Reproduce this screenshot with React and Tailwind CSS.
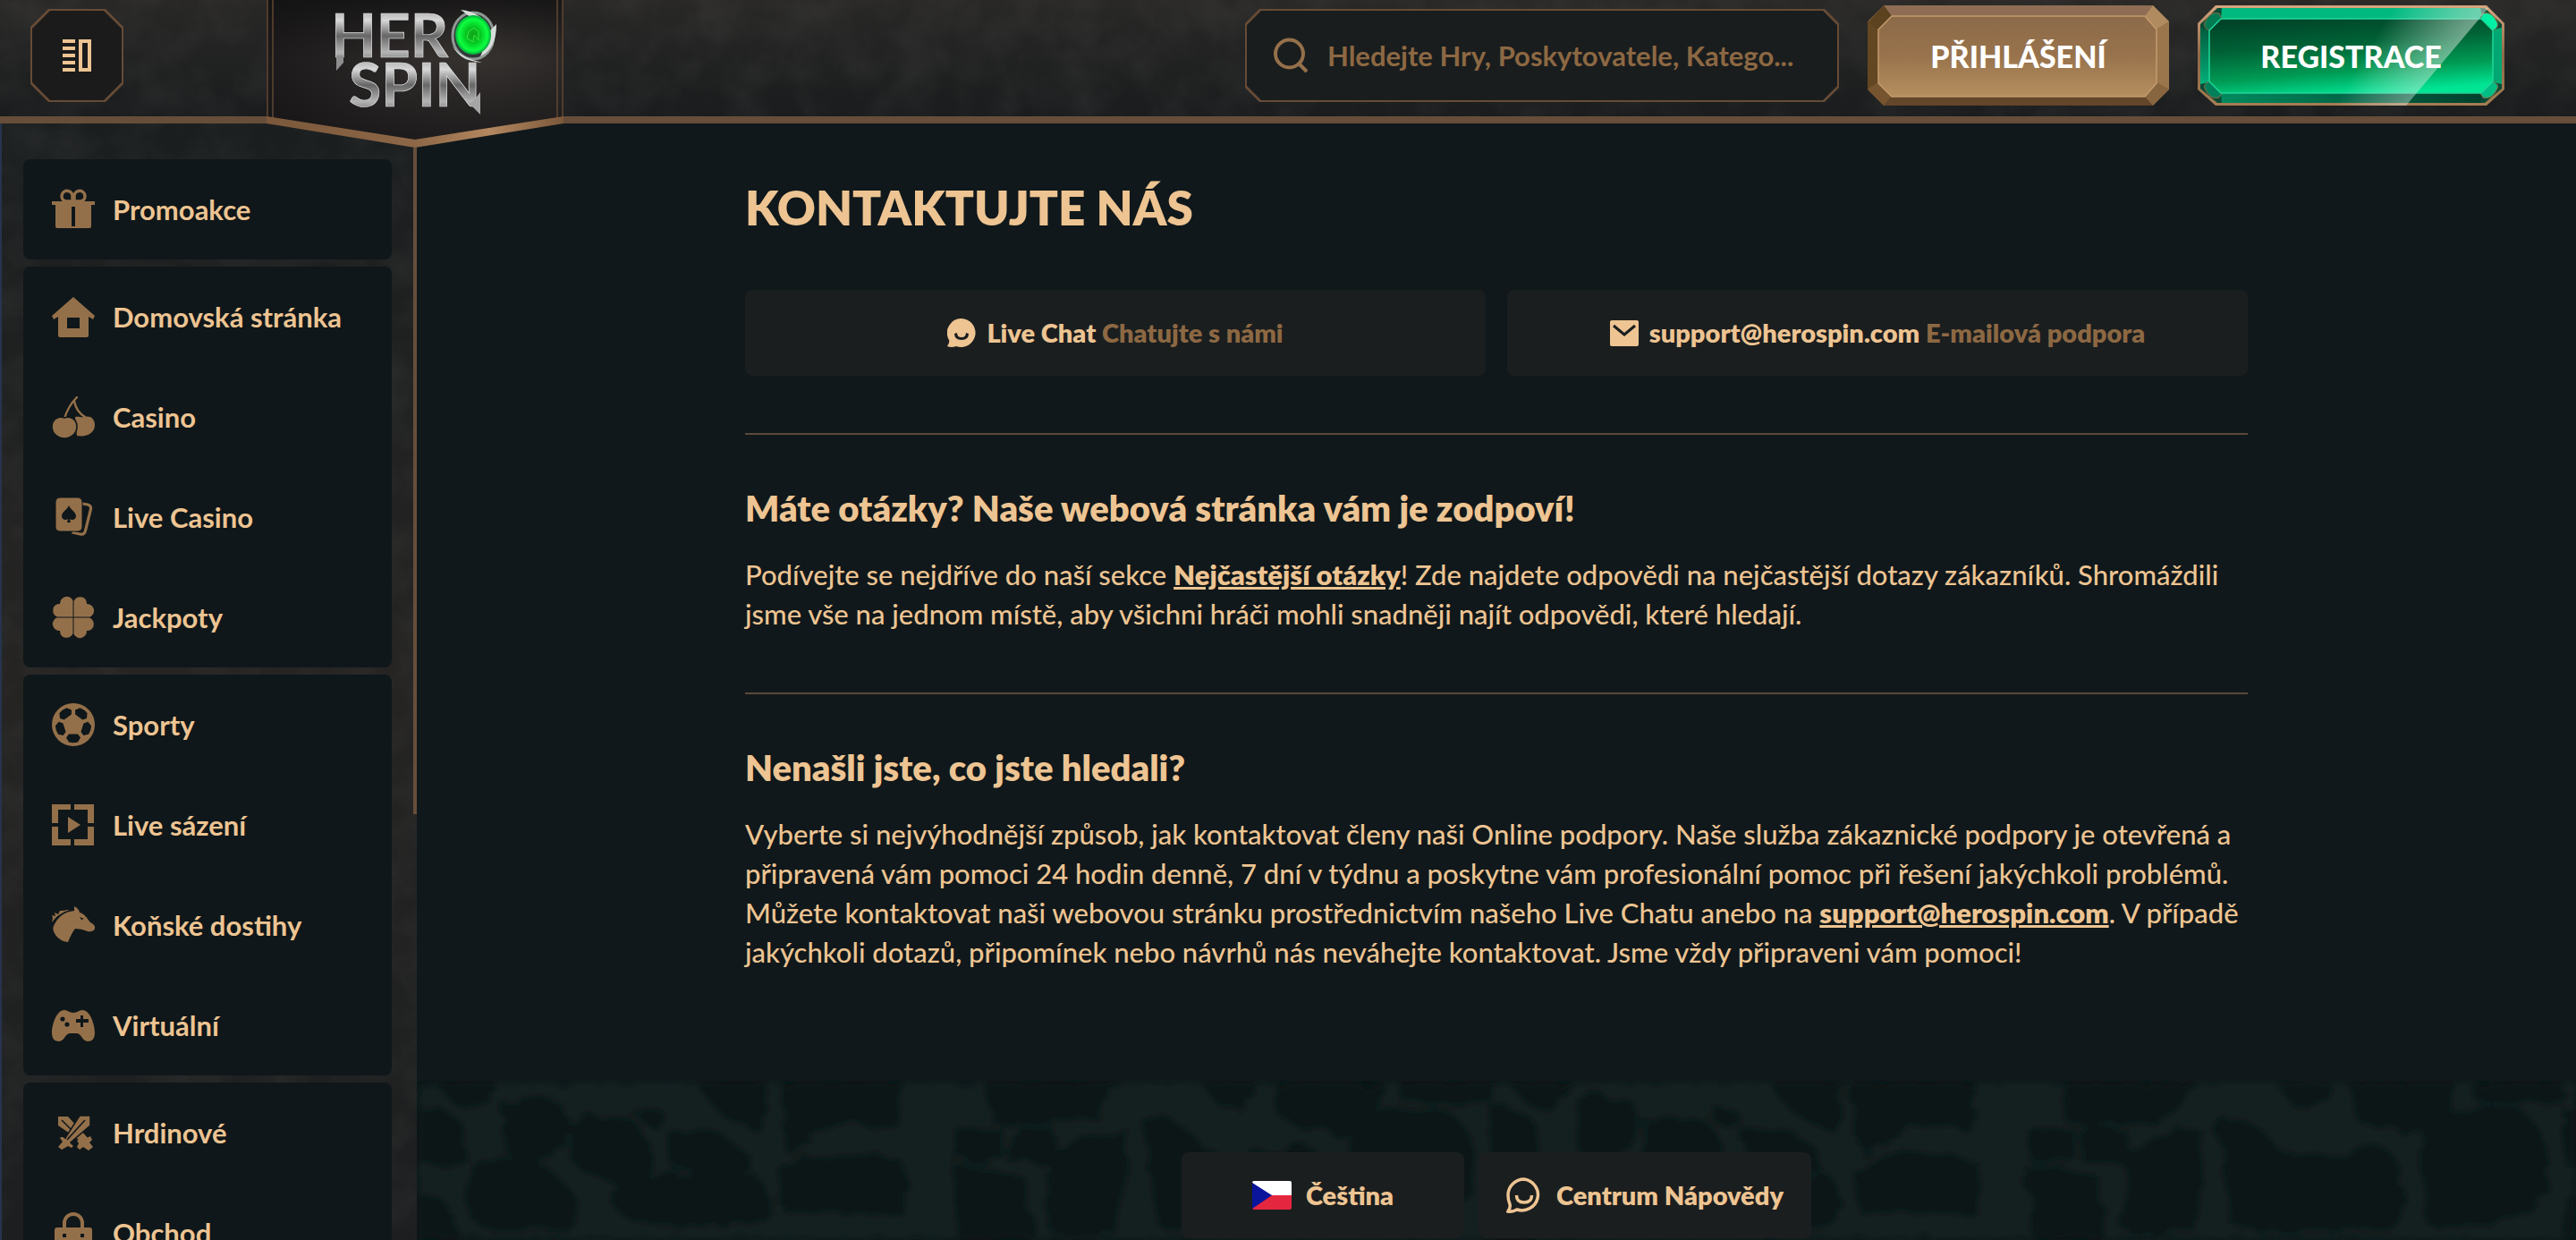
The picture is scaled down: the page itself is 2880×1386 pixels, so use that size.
import React from "react";

const bg = "#0f171a";

const Icon = ({ children, className = "size-12" }) => (
  <svg viewBox="0 0 48 48" fill="currentColor" className={className} aria-hidden="true">
    {children}
  </svg>
);

const Gift = () => (
  <Icon>
    <path d="M0 15h48v4h-4v24q0 2-2 2H6q-2 0-2-2V19H0z" />
    <path d="M23 15h-8a6 6 0 1 1 8-5zM25 15h8a6 6 0 1 0-8-5z" fill={bg} stroke="currentColor" strokeWidth="3.5" />
    <path d="M22 21h4v22h-4z" fill={bg} />
  </Icon>
);

const Home = () => (
  <Icon>
    <path
      fillRule="evenodd"
      d="M24 2l24 21-2 4-5-3v21q0 2-2 2H9q-2 0-2-2V24l-5 3-2-4zM17 25v12h14V25z"
    />
  </Icon>
);

const Cherry = () => (
  <Icon>
    <path d="M14 26Q18 12 28 2M25 6q2 12 12 18" fill="none" stroke="currentColor" strokeWidth="2.4" strokeLinecap="round" />
    <path d="M26 24c4-1 7 1 10 0 6-2 12 1 12 9 0 9-9 14-20 12z" />
    <path
      d="M14 25c5-2 14 0 14 10 0 7-6 13-14 13S0 42 0 35c0-10 9-12 14-10z"
      stroke={bg}
      strokeWidth="1.6"
    />
  </Icon>
);

const Cards = () => (
  <Icon>
    <path d="M34 9l6 1q4 1 3.500 5l-6 24q-1 5-6 4l-9-2" fill="none" stroke="currentColor" strokeWidth="3.2" />
    <rect x="4" y="2" width="30" height="38" rx="5" stroke={bg} strokeWidth="1" />
    <path d="M19 11c2 5 8 7 8 12 0 4-5 5-7 3l1 4h-4l1-4c-2 2-7 1-7-3 0-5 6-7 8-12z" fill={bg} />
  </Icon>
);

const Clover = () => (
  <Icon>
    {[0, 90, 180, 270].map((a) => (
      <path
        key={a}
        transform={`rotate(${a} 24 24)`}
        d="M23.500 23.500V5Q20 0 15 1 9 3 9 9 3 9 1.500 14 0 21 6 23.500z"
      />
    ))}
  </Icon>
);

const Ball = () => (
  <Icon>
    <circle cx="24" cy="24" r="24" />
    <g fill={bg}>
      {[0, 72, 144, 216, 288].map((a) => (
        <path key={a} transform={`rotate(${a} 24 24)`} d="M19 34.500h10l3 4-3 5q-5 1.500-10 0l-3-5z" />
      ))}
    </g>
  </Icon>
);

const LiveBet = () => (
  <Icon>
    <path d="M0 1h21v6H7v15H0zM25 1h22v21h-7V7H25zM0 26h7v14h14v7H0zM40 26h7v21H25v-7h15zM18 15l14 9-14 9z" />
  </Icon>
);

const Horse = () => (
  <Icon>
    <path d="M0 21l1-5-1-3 4 1-1-4 4 2 2-4c5 0 7-1 11-1C11 10 6 13 0 21z" />
    <path
      fillRule="evenodd"
      d="M2 25C6 16 13 9 25 8V3q5 2 6 7c5 1 8 6 12 11q6 3 5 7-2 4-8 3-7-3-14-3-4 5-8 15-9-1-14-8-4-6-2-10zM31 15l2 3 3-1z"
    />
  </Icon>
);

const Gamepad = () => (
  <Icon>
    <path
      fillRule="evenodd"
      d="M14 7c4 0 5 3 10 3s6-3 10-3c9 0 14 17 14 25 0 7-3 10-8 10-6 0-7-9-12-9h-8c-5 0-6 9-12 9-5 0-8-3-8-10C0 24 5 7 14 7zM32 13v4h-5v4h5v5h3v-5h6v-4h-6v-4z"
    />
    <circle cx="12" cy="17" r="2.600" fill={bg} />
    <circle cx="17" cy="23" r="2.600" fill={bg} />
  </Icon>
);

const Swords = () => (
  <Icon>
    <path d="M7 6h11L43 33l-4 5L7 16z" />
    <path d="M11 10l16 16" stroke={bg} strokeWidth="1.600" />
    <path d="M43 5v11L21 35l4 4-3 3-4-2-7 4-5-4 5-6-3-4 3-3 4 3L31 5z" stroke={bg} strokeWidth="1.600" />
    <path d="M37 10L17 32" stroke={bg} strokeWidth="1.600" />
    <path d="M35 27l4 3 4-2 2 4-3 3 4 5-5 4-6-4-4 3-3-3 2-4-2-3z" />
  </Icon>
);

const Bag = () => (
  <Icon>
    <path d="M14 20v-7a10 10 0 0 1 20 0v7" fill="none" stroke="currentColor" strokeWidth="4" />
    <path fillRule="evenodd" d="M6 18h36q3 0 3 3v24H3V21q0-3 3-3zM12 25v4h4v-4zM32 25v4h4v-4z" />
  </Icon>
);

const groups = [
  [["Promoakce", Gift]],
  [["Domovská stránka", Home], ["Casino", Cherry], ["Live Casino", Cards], ["Jackpoty", Clover]],
  [["Sporty", Ball], ["Live sázení", LiveBet], ["Koňské dostihy", Horse], ["Virtuální", Gamepad]],
  [["Hrdinové", Swords], ["Obchod", Bag]],
];

const Grain = ({ id }) => (
  <svg className="absolute inset-0 size-full" aria-hidden="true">
    <filter id={id}>
      <feTurbulence type="fractalNoise" baseFrequency="0.022" numOctaves="5" seed="8" />
      <feColorMatrix values="0 0 0 0 0.5  0 0 0 0 0.48  0 0 0 0 0.46  0.9 0 0 0 -0.3" />
    </filter>
    <rect width="100%" height="100%" filter={`url(#${id})`} opacity="0.13" />
  </svg>
);

const Logo = () => (
  <svg viewBox="0 0 332 166" className="h-[166px] w-[332px]" role="img" aria-label="Hero Spin">
    <defs>
      <radialGradient id="plate" cx="0.7" cy="0.3" r="0.8">
        <stop offset="0" stopColor="#3a3633" />
        <stop offset="0.5" stopColor="#272424" />
        <stop offset="1" stopColor="#191718" />
      </radialGradient>
      <linearGradient id="plateTop" x1="0" y1="0" x2="0" y2="1">
        <stop offset="0" stopColor="#111" stopOpacity="0.7" />
        <stop offset="0.4" stopColor="#111" stopOpacity="0" />
      </linearGradient>
      <linearGradient id="bronze">
        <stop offset="0" stopColor="#7b583b" />
        <stop offset="0.5" stopColor="#8d6747" />
        <stop offset="0.75" stopColor="#b3875f" />
        <stop offset="1" stopColor="#7b583b" />
      </linearGradient>
      <linearGradient id="steel" x1="0" y1="0" x2="0" y2="1">
        <stop offset="0" stopColor="#7d7d7d" />
        <stop offset="0.3" stopColor="#d8d8d8" />
        <stop offset="0.52" stopColor="#666" />
        <stop offset="0.75" stopColor="#b4b4b4" />
        <stop offset="1" stopColor="#505050" />
      </linearGradient>
      <radialGradient id="gem">
        <stop offset="0" stopColor="#12a018" />
        <stop offset="0.4" stopColor="#05c520" />
        <stop offset="0.8" stopColor="#0cff40" />
        <stop offset="1" stopColor="#06a83c" />
      </radialGradient>
    </defs>
    <path d="M0 0H332V137L166 165 0 137z" fill="url(#plate)" />
    <path d="M0 0H332V137L166 165 0 137z" fill="url(#plateTop)" />
    <path d="M1 0V134M7 0V132M331 0V134M325 0V132" stroke="#5f4735" strokeWidth="1.500" />
    <path d="M0 130L166 156 332 130V138L166 165 0 138z" fill="url(#bronze)" />
    <g fontFamily="Lato, sans-serif" fontWeight="700" fontSize="66" fill="url(#steel)" stroke="#dedede" strokeWidth="0.700">
      <text x="72" y="64">HER</text>
      <text x="92" y="119">SPIN</text>
    </g>
    <path d="M78 62h8v8l-8 9z" fill="#8f8f8f" />
    <path d="M228 117l11-14v25z" fill="#a5a5a5" />
    <ellipse cx="231" cy="40" rx="23" ry="26" fill="#33373a" stroke="#8f9994" strokeWidth="3" />
    <path d="M217 11q24 2 33 23l7-7q0 28-18 36 14-28-22-52zM207 50q8 14 34 20-24-1-34-20z" fill="#d9dedb" />
    <ellipse cx="231" cy="39" rx="20" ry="22" fill="url(#gem)" />
    <path d="M224 43l2-8 6-4 5 4v10l-5-6-1 8z" fill="none" stroke="#39e33f" strokeWidth="1" />
  </svg>
);

const LoginPlate = () => (
  <svg viewBox="0 0 337 112" className="absolute inset-0 size-full" preserveAspectRatio="none" aria-hidden="true">
    <defs>
      <linearGradient id="loginFace" x1="0" y1="0" x2="0" y2="1">
        <stop offset="0" stopColor="#8c6a49" />
        <stop offset="0.5" stopColor="#98734c" />
        <stop offset="1" stopColor="#b68f60" />
      </linearGradient>
    </defs>
    <path d="M18 0H319L337 18V94L319 112H18L0 94V18z" fill="#7d5d3e" />
    <path d="M18 0H319L310 12H27z" fill="#8f6d55" />
    <path d="M18 0L27 12 12 27 0 20z" fill="#5c421f" />
    <path d="M0 18L12 27V86L0 94z" fill="#634722" />
    <path d="M319 0L337 18 323 27 310 12z" fill="#b18b60" />
    <path d="M337 18V94L323 86V27z" fill="#9b764c" />
    <path d="M0 94L12 86 26 102 18 112z" fill="#75542f" />
    <path d="M18 112L27 101H310L319 112z" fill="#63452a" />
    <path d="M337 94L323 86 310 102 319 112z" fill="#87653f" />
    <path d="M27 12H310L323 27V87L310 102H27L12 87V27z" fill="url(#loginFace)" stroke="#c49b6d" strokeWidth="1.500" />
  </svg>
);

const RegisterPlate = () => (
  <svg viewBox="0 0 343 112" className="absolute inset-0 size-full" preserveAspectRatio="none" aria-hidden="true">
    <defs>
      <linearGradient id="regFace" x1="0.3" y1="0" x2="0.6" y2="1">
        <stop offset="0" stopColor="#004529" />
        <stop offset="0.35" stopColor="#006236" />
        <stop offset="0.7" stopColor="#009a54" />
        <stop offset="1" stopColor="#00e594" />
      </linearGradient>
      <linearGradient id="regRim" x1="0" y1="0" x2="0" y2="1">
        <stop offset="0" stopColor="#d7a57e" />
        <stop offset="0.5" stopColor="#8d6a48" />
        <stop offset="1" stopColor="#a67d52" />
      </linearGradient>
      <linearGradient id="regSide" x1="0" y1="0" x2="0" y2="1">
        <stop offset="0" stopColor="#005b3d" />
        <stop offset="1" stopColor="#00b07a" />
      </linearGradient>
      <linearGradient id="regBottom">
        <stop offset="0" stopColor="#008a5e" />
        <stop offset="1" stopColor="#00402c" />
      </linearGradient>
      <linearGradient id="gloss" gradientUnits="userSpaceOnUse" x1="205" y1="25" x2="276" y2="68">
        <stop offset="0" stopColor="#fff" stopOpacity="0" />
        <stop offset="1" stopColor="#d8e8dd" stopOpacity="0.5" />
      </linearGradient>
    </defs>
    <path d="M20 0H323L343 20V94L323 112H20L0 94V20z" fill="url(#regRim)" />
    <path d="M22 3H321L340 21V93L321 109H22L3 93V21z" fill="#0a4a34" />
    <path d="M27 3H316L319 15H26z" fill="#00b97f" />
    <path d="M27 109H316L319 98H26z" fill="url(#regBottom)" />
    <path d="M3 25L13 27V86L3 88z" fill="url(#regSide)" />
    <path d="M340 25L330 27V86L340 88z" fill="#00a773" />
    <path d="M8 19Q14 6 24 9L27 15 13 28Q6 25 8 19z" fill="#017a52" stroke="#8d6a48" strokeWidth="1" />
    <path d="M335 19Q329 6 319 9L316 15 330 28Q337 25 335 19z" fill="#00f0a4" stroke="#8d6a48" strokeWidth="1" />
    <path d="M8 93Q14 106 24 103L27 98 13 85Q6 88 8 93z" fill="#01805a" stroke="#8d6a48" strokeWidth="1" />
    <path d="M335 93Q329 106 319 103L316 98 330 85Q337 88 335 93z" fill="#00bd84" stroke="#8d6a48" strokeWidth="1" />
    <path d="M26 15H317L330 28V85L317 98H26L13 85V28z" fill="url(#regFace)" stroke="#1fd79a" strokeWidth="1.500" />
    <path d="M215 3H325L233 112H120z" fill="url(#gloss)" />
  </svg>
);

const stones = [
  "M20 0H86Q84 22 70 28 50 32 40 22z", "M0 32Q30 26 50 50 60 90 40 96L0 92z", "M98 26Q120 10 160 26 180 50 150 80 120 96 100 76z",
  "M175 52Q200 34 240 46 266 70 256 96 236 112 200 108 164 92 175 52z", "M62 100Q90 84 140 96 190 130 176 160 120 170 66 158 50 130 62 100z",
  "M240 34Q256 24 276 36 280 50 262 50z", "M284 60Q320 46 350 70 376 80 370 96 330 104 290 96z", "M222 108Q300 104 376 104 400 130 392 156 320 170 240 154 210 140 222 108z",
  "M316 0H392Q392 40 380 52 330 40 316 0z", "M406 0H540Q552 40 520 56 490 40 460 52 430 80 412 78z", "M404 100Q450 76 540 88 550 120 540 148 470 146 412 146z",
  "M604 56H652V86L604 88z", "M662 56H712V92L664 90z", "M640 0H792Q770 20 760 42 700 50 646 46z", "M600 96L676 106Q690 140 680 190H610z",
  "M712 90Q740 60 790 50 802 100 780 165 730 180 706 164z", "M812 40Q860 44 880 78 900 100 990 70 1040 100 1010 165 900 170 830 160z",
  "M880 4H938Q926 36 900 30z", "M958 0H1080Q1078 34 1046 52 1010 60 970 44z", "M1040 60Q1080 24 1150 34 1190 60 1180 120 1150 170 1050 160z",
  "M1100 0H1200V22Q1150 26 1100 20z", "M0 130Q40 120 50 190H0z",
];

const StoneWall = () => (
  <svg className="absolute inset-0 size-full" aria-hidden="true">
    <defs>
      <filter id="soft" x="0" y="0" width="1" height="1">
        <feTurbulence type="fractalNoise" baseFrequency="0.04" numOctaves="4" seed="4" result="n" />
        <feDisplacementMap in="SourceGraphic" in2="n" scale="24" result="d" />
        <feGaussianBlur in="d" stdDeviation="5" />
      </filter>
      <pattern id="wall" width="1200" height="190" patternUnits="userSpaceOnUse">
        <rect width="1200" height="190" fill="#162122" />
        {stones.map((d, i) => (
          <path key={d} d={d} fill={i % 3 ? "#091516" : "#0c1818"} stroke="#0b1718" strokeWidth="4" />
        ))}
      </pattern>
    </defs>
    <rect width="100%" height="100%" fill="#0b1718" />
    <rect width="100%" height="100%" fill="url(#wall)" filter="url(#soft)" opacity="0.85" />
  </svg>
);

const cut20 = "[clip-path:polygon(20px_0,calc(100%-20px)_0,100%_20px,100%_calc(100%-20px),calc(100%-20px)_100%,20px_100%,0_calc(100%-20px),0_20px)]";
const cut16 = "[clip-path:polygon(16px_0,calc(100%-16px)_0,100%_16px,100%_calc(100%-16px),calc(100%-16px)_100%,16px_100%,0_calc(100%-16px),0_16px)]";

export default function App() {
  return (
    <div className="flex h-screen flex-col overflow-hidden bg-[#10181b] font-[Lato,sans-serif] text-[#edc492]">
      <header className="relative z-10 flex h-[138px] shrink-0 items-start border-b-8 border-[#664e3a] bg-linear-to-b from-[#292827] to-[#1a1c1d] pr-20 pl-[34px]">
        <Grain id="grainTop" />
        <button type="button" aria-label="Menu" className={`relative mt-[10px] size-[104px] bg-[#664b36] p-0.5 ${cut20}`}>
          <span className={`flex size-full items-center justify-center bg-[#1b1b1b] ${cut20}`}>
            <svg viewBox="0 0 32 36" className="h-9 w-8" fill="currentColor" aria-hidden="true">
              <path fillRule="evenodd" d="M0 0h14v4H0zM0 8h14v4H0zM0 16h14v4H0zM0 24h14v4H0zM0 32h14v4H0zM18 0h14v36H18zM22 4v28h6V4z" />
            </svg>
          </span>
        </button>
        <a href="#home" className="relative ml-40 shrink-0">
          <Logo />
        </a>
        <div className="relative ml-auto flex gap-8">
          <div className={`mt-[10px] h-[104px] w-[664px] bg-[#664b36] p-0.5 ${cut16}`}>
            <label className={`flex size-full items-center gap-5 bg-[#1a1d1e] pr-9 pl-[30px] ${cut16}`}>
              <svg viewBox="0 0 40 40" className="size-10 shrink-0 text-[#94704a]" fill="none" stroke="currentColor" strokeWidth="4" aria-hidden="true">
                <circle cx="17.500" cy="18" r="15.500" />
                <path d="M28 29l9 9" />
              </svg>
              <input
                type="text"
                aria-label="Hledat"
                placeholder="Hledejte Hry, Poskytovatele, Katego..."
                className="min-w-0 flex-1 bg-transparent text-[31px] font-bold outline-none placeholder:text-[#8c6843]"
              />
            </label>
          </div>
          <button type="button" className="relative mt-[6px] h-28 w-[337px] text-[34px] font-black text-white">
            <LoginPlate />
            <span className="relative">PŘIHLÁŠENÍ</span>
          </button>
          <button type="button" className="relative mt-[6px] h-28 w-[343px] text-[34px] font-black text-white">
            <RegisterPlate />
            <span className="relative">REGISTRACE</span>
          </button>
        </div>
      </header>

      <div className="flex min-h-0 flex-1">
        <aside className="relative flex w-[466px] shrink-0 overflow-hidden border-l-2 border-[#26344f] bg-linear-to-b from-[#1b1e1f] via-[#252423] to-[#1c1e1f]">
          <Grain id="grainSide" />
          <nav className="relative flex flex-1 flex-col gap-2 pt-10 pr-6 pl-6">
            {groups.map((items) => (
              <ul key={items[0][0]} className="rounded-lg bg-[#0f171a]">
                {items.map(([label, Glyph]) => (
                  <li key={label}>
                    <a href="#nav" className="flex h-28 items-center gap-5 pl-8 text-[31px] font-bold">
                      <span className="text-[#94704a]">
                        <Glyph />
                      </span>
                      {label}
                    </a>
                  </li>
                ))}
              </ul>
            ))}
          </nav>
          <div className="relative h-[772px] w-1 bg-[#664e3a]" />
        </aside>

        <main className="flex min-w-0 flex-1 flex-col">
          <div className="mx-auto w-full max-w-[1680px] pt-[62px] pb-[122px]">
            <h1 className="mb-[60px] text-[53px] leading-[64px] font-extrabold">KONTAKTUJTE NÁS</h1>
            <div className="mb-16 grid grid-cols-2 gap-6 text-[29px] font-extrabold">
              <a href="#chat" className="flex h-24 items-center justify-center gap-3 rounded-lg bg-[#1b1e1f]">
                <svg viewBox="0 0 32 32" className="size-8" fill="currentColor" aria-hidden="true">
                  <path fillRule="evenodd" d="M16 0a16 16 0 1 1-6 31q-5 2-10 0 3-4 2-7A16 16 0 0 1 16 0zM8 17q0 7 8 7t8-7l-3-1q0 5-5 5t-5-5z" />
                </svg>
                <span>
                  Live Chat <span className="text-[#8c6843]">Chatujte s námi</span>
                </span>
              </a>
              <a href="mailto:support@herospin.com" className="flex h-24 items-center justify-center gap-3 rounded-lg bg-[#1b1e1f]">
                <svg viewBox="0 0 32 29" className="h-[29px] w-8" aria-hidden="true">
                  <rect width="32" height="29" rx="2" fill="currentColor" />
                  <path d="M4 6l12 10L28 6" fill="none" stroke="#1b1e1f" strokeWidth="3" />
                </svg>
                <span>
                  support@herospin.com <span className="text-[#8c6843]">E-mailová podpora</span>
                </span>
              </a>
            </div>
            <section className="border-t-2 border-[#5b493b] pt-14 pb-[66px]">
              <h2 className="mb-[26px] text-[40px] leading-[52px] font-extrabold">Máte otázky? Naše webová stránka vám je zodpoví!</h2>
              <p className="text-[31px] leading-[44px] font-medium">
                Podívejte se nejdříve do naší sekce{" "}
                <a href="#faq" className="font-extrabold underline">Nejčastější otázky</a>! Zde najdete odpovědi na
                nejčastější dotazy zákazníků. Shromáždili jsme vše na jednom místě, aby všichni hráči mohli snadněji
                najít odpovědi, které hledají.
              </p>
            </section>
            <section className="border-t-2 border-[#5b493b] pt-14">
              <h2 className="mb-[26px] text-[40px] leading-[52px] font-extrabold">Nenašli jste, co jste hledali?</h2>
              <p className="text-[31px] leading-[44px] font-medium">
                Vyberte si nejvýhodnější způsob, jak kontaktovat členy naši Online podpory. Naše služba zákaznické
                podpory je otevřená a připravená vám pomoci 24 hodin denně, 7 dní v týdnu a poskytne vám profesionální
                pomoc při řešení jakýchkoli problémů. Můžete kontaktovat naši webovou stránku prostřednictvím našeho
                Live Chatu anebo na{" "}
                <a href="mailto:support@herospin.com" className="font-extrabold underline">support@herospin.com</a>. V
                případě jakýchkoli dotazů, připomínek nebo návrhů nás neváhejte kontaktovat. Jsme vždy připraveni vám
                pomoci!
              </p>
            </section>
          </div>

          <footer className="relative flex flex-1 items-start justify-center gap-4 pt-20 text-[29px] font-extrabold">
            <StoneWall />
            <button type="button" className="relative flex h-24 w-[316px] items-center justify-center gap-4 rounded-lg bg-[#1b1e1f]">
              <svg viewBox="0 0 44 32" className="h-8 w-11" aria-hidden="true">
                <path d="M2 0h40q2 0 2 2v14H16L0 2q0-2 2-2z" fill="#fff" />
                <path d="M22 16h22v14q0 2-2 2H2q-2 0-2-2z" fill="#e5263f" />
                <path d="M0 2L22 16 0 31z" fill="#0a159c" />
              </svg>
              Čeština
            </button>
            <a href="#help" className="relative flex h-24 w-[372px] items-center justify-center gap-4 rounded-lg bg-[#1b1e1f]">
              <svg viewBox="0 0 40 40" className="size-10" fill="none" stroke="currentColor" strokeWidth="3.500" aria-hidden="true">
                <path d="M20 2a18 17.500 0 1 1-8 34q-5 3-10 2 3-4 2-8-2-5-2-10A18 18 0 0 1 20 2z" />
                <path d="M11.500 20q0 8 8.500 8t8.500-8" />
              </svg>
              Centrum Nápovědy
            </a>
          </footer>
        </main>
      </div>
    </div>
  );
}
